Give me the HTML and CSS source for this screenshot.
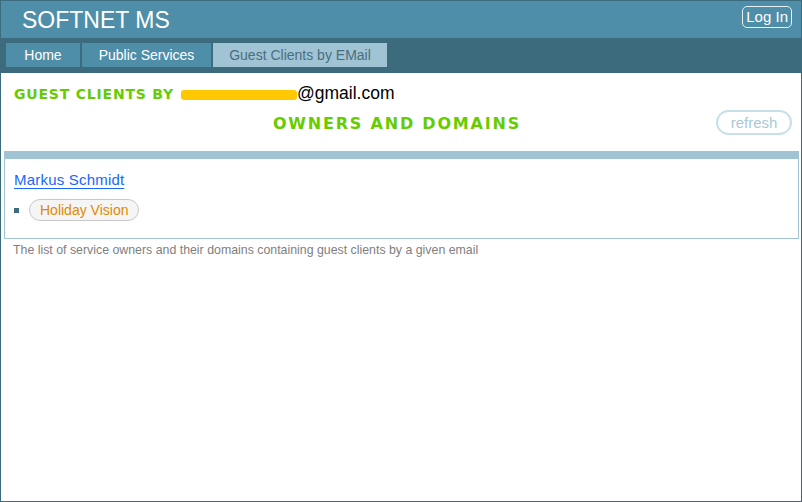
FILE: index.html
```html
<!DOCTYPE html>
<html>
<head>
<meta charset="utf-8">
<title>SOFTNET MS</title>
<link rel="stylesheet" href="styles.css">
</head>
<body>
<div class="page">
  <header class="header">
    <div class="brand">SOFTNET MS</div>
    <a class="login" href="#">Log In</a>
  </header>
  <nav class="nav">
    <a class="tab tab-home" href="#">Home</a>
    <a class="tab tab-public" href="#">Public Services</a>
    <a class="tab tab-guest active" href="#">Guest Clients by EMail</a>
  </nav>
  <main class="content">
    <div class="title-line">
      <span class="title">GUEST CLIENTS BY</span>
      <span class="mask"></span><span class="email">@gmail.com</span>
    </div>
    <div class="subhead">
      <span class="sub-title">OWNERS AND DOMAINS</span>
      <button class="refresh">refresh</button>
    </div>
    <section class="panel">
      <a class="owner" href="#">Markus Schmidt</a>
      <ul class="domains">
        <li><span class="domain">Holiday Vision</span></li>
      </ul>
    </section>
    <p class="desc">The list of service owners and their domains containing guest clients by a given email</p>
  </main>
</div>
</body>
</html>
```

FILE: styles.css
```css
html, body {
  margin: 0;
  padding: 0;
  background: #fff;
}
body {
  font-family: "Liberation Sans", Arial, sans-serif;
}
.page {
  width: 802px;
  height: 502px;
  box-sizing: border-box;
  border: 1px solid #3d6b7e;
  display: flex;
  flex-direction: column;
  overflow: hidden;
}
.header {
  height: 37px;
  background: #4f8ea8;
  display: flex;
  align-items: center;
  justify-content: space-between;
  padding: 0 9px 0 21px;
}
.brand {
  color: #fff;
  font-size: 23px;
  padding-top: 1px;
}
.login {
  color: #fff;
  text-decoration: none;
  font-size: 15px;
  border: 1px solid #e8f0f4;
  border-radius: 5px;
  padding: 0 3px 0 3px;
  line-height: 20px;
  margin-top: -6px;
}
.nav {
  height: 35px;
  box-sizing: border-box;
  background: #3d6b7e;
  display: flex;
  gap: 2px;
  padding: 5px 5px;
}
.tab {
  height: 24px;
  line-height: 24px;
  background: #4f8ea8;
  color: #fff;
  text-decoration: none;
  font-size: 14px;
  text-align: center;
  white-space: nowrap;
}
.tab-home { width: 74px; }
.tab-public { width: 129px; }
.tab-guest { width: 174px; }
.tab.active {
  background: #a0c4d4;
  color: #4a6e80;
}
.content {
  flex: 1;
  display: flex;
  flex-direction: column;
}
.title-line {
  padding: 10px 0 0 13px;
  height: 22px;
  display: flex;
  align-items: baseline;
}
.title {
  font-family: "DejaVu Sans", Verdana, sans-serif;
  font-weight: bold;
  font-size: 14px;
  letter-spacing: 0.8px;
  color: #66cc00;
  margin-right: 7px;
}
.mask {
  display: inline-block;
  width: 116px;
  height: 10px;
  background: #ffc800;
  border-radius: 3px;
  align-self: center;
  margin-top: 2px;
}
.email {
  font-size: 17.5px;
  color: #000;
}
.subhead {
  position: relative;
  height: 46px;
  display: flex;
  justify-content: center;
  align-items: flex-start;
  padding-right: 8px;
}
.sub-title {
  font-family: "DejaVu Sans", Verdana, sans-serif;
  font-weight: bold;
  font-size: 16px;
  letter-spacing: 1.8px;
  color: #66cc00;
  margin-top: 9px;
}
.refresh {
  position: absolute;
  right: 9px;
  top: 5px;
  width: 76px;
  height: 25px;
  box-sizing: border-box;
  border: 2px solid #c7e0e8;
  border-radius: 13px;
  background: #fff;
  color: #a9c9d6;
  font-family: "Liberation Sans", Arial, sans-serif;
  font-size: 15px;
  padding: 0;
  line-height: 20px;
}
.panel {
  margin: 0 2px 0 3px;
  border: 1px solid #a0c4d4;
  border-top: 8px solid #a0c4d4;
  height: 67px;
  padding: 12px 0 0 9px;
}
.owner {
  display: inline-block;
  color: #1a66ff;
  font-size: 15px;
  letter-spacing: 0.2px;
  line-height: 18px;
  text-underline-offset: 3px;
}
.domains {
  list-style: none;
  margin: 10px 0 0 0;
  padding: 0;
}
.domains li {
  display: flex;
  align-items: center;
}
.domains li::before {
  content: "";
  width: 5px;
  height: 5px;
  background: #3d6b7e;
  margin-right: 10px;
}
.domain {
  display: inline-block;
  height: 22px;
  box-sizing: border-box;
  border: 1px solid #c8c8c8;
  border-radius: 11px;
  background: #f5f5f5;
  color: #e08a00;
  font-size: 14px;
  line-height: 20px;
  padding: 0 10px;
}
.desc {
  margin: 4px 0 0 12px;
  font-size: 12.35px;
  color: #808080;
}
```
